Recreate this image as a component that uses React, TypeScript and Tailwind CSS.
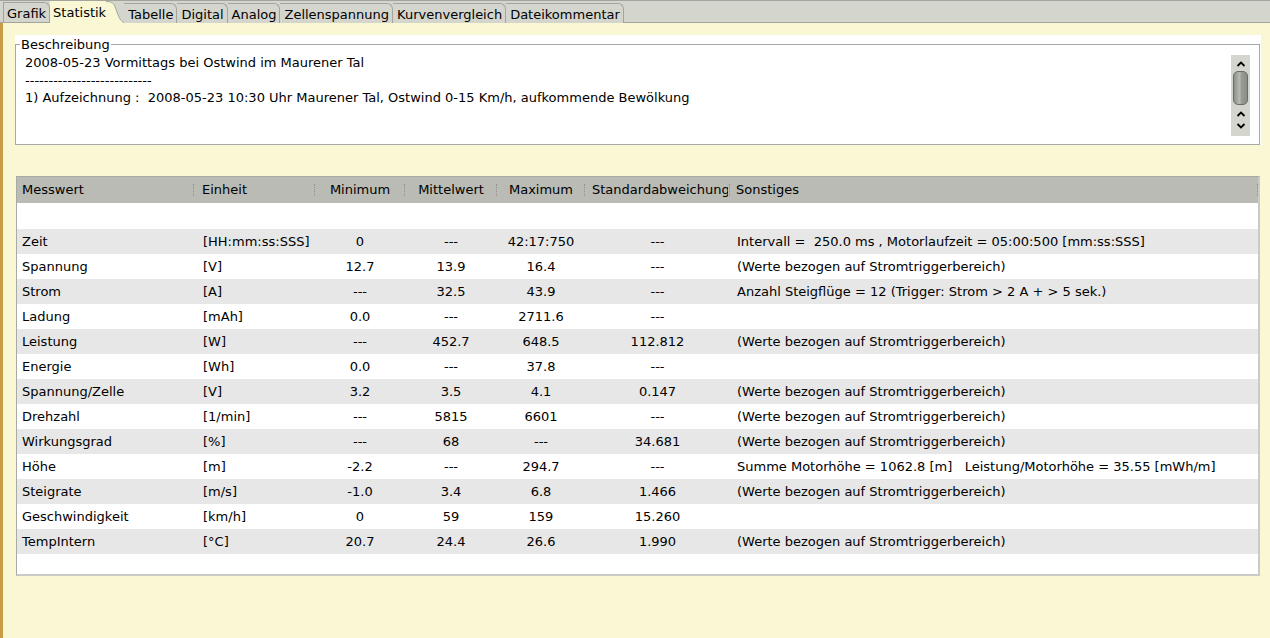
import React from "react";

const W = "(Werte bezogen auf Stromtriggerbereich)";
const rows: string[][] = [
  ["Zeit", "[HH:mm:ss:SSS]", "0", "---", "42:17:750", "---", "Intervall =  250.0 ms , Motorlaufzeit = 05:00:500 [mm:ss:SSS]"],
  ["Spannung", "[V]", "12.7", "13.9", "16.4", "---", W],
  ["Strom", "[A]", "---", "32.5", "43.9", "---", "Anzahl Steigflüge = 12 (Trigger: Strom > 2 A + > 5 sek.)"],
  ["Ladung", "[mAh]", "0.0", "---", "2711.6", "---", ""],
  ["Leistung", "[W]", "---", "452.7", "648.5", "112.812", W],
  ["Energie", "[Wh]", "0.0", "---", "37.8", "---", ""],
  ["Spannung/Zelle", "[V]", "3.2", "3.5", "4.1", "0.147", W],
  ["Drehzahl", "[1/min]", "---", "5815", "6601", "---", W],
  ["Wirkungsgrad", "[%]", "---", "68", "---", "34.681", W],
  ["Höhe", "[m]", "-2.2", "---", "294.7", "---", "Summe Motorhöhe = 1062.8 [m]   Leistung/Motorhöhe = 35.55 [mWh/m]"],
  ["Steigrate", "[m/s]", "-1.0", "3.4", "6.8", "1.466", W],
  ["Geschwindigkeit", "[km/h]", "0", "59", "159", "15.260", ""],
  ["TempIntern", "[°C]", "20.7", "24.4", "26.6", "1.990", W],
];

function Sep() {
  return <span className="absolute right-0 top-[7px] h-[12px] border-r border-dotted border-[#8f918a]" />;
}

function Tab({ label }: { label: string }) {
  return (
    <div className="h-[21px] mt-[2px] pl-[4px] pr-[3px] border-r border-t border-[#a3a49e] rounded-tr-[6px] flex items-center bg-[#d4d6ce]">
      {label}
    </div>
  );
}

export default function App() {
  return (
    <div className="w-[1270px] h-[638px] flex flex-col overflow-hidden font-['DejaVu_Sans',sans-serif] text-[13px] text-black">
      {/* tab bar */}
      <div className="h-[23px] flex bg-[#d4d6ce] border-t border-b border-[#a3a49e] pl-[3px] leading-none">
        <div className="h-[21px] mt-[1px] pl-[3px] pr-[3px] border-l border-r border-t border-[#a3a49e] rounded-tr-[6px] flex items-center">
          Grafik
        </div>
        <div className="relative h-[22px] -mb-[1px] flex z-10">
          <div className="h-[22px] pl-[3px] bg-[#faf7d5] flex items-center">Statistik</div>
          <svg width="18" height="22" viewBox="0 0 18 22" className="block">
            <path d="M0 0 C8 0 8 3 11 11 C13 17 15 20.5 18 21.5 L18 22 L0 22 Z" fill="#faf7d5" />
            <path d="M0 0.5 C8 0.5 8 3 11 11 C13 17 15 20.5 18 21.5" fill="none" stroke="#a3a49e" strokeWidth="1" />
          </svg>
        </div>
        <Tab label="Tabelle" />
        <Tab label="Digital" />
        <Tab label="Analog" />
        <Tab label="Zellenspannung" />
        <Tab label="Kurvenvergleich" />
        <Tab label="Dateikommentar" />
      </div>

      {/* content */}
      <div className="flex-1 bg-[#faf7d5] border-l-[3px] border-[#c69c45] pl-[12px] pr-[9px] pt-[12px]">
        {/* Beschreibung group */}
        <div className="h-[110px] w-[1246px] bg-white pt-[9px]">
          <div className="relative h-[101px] border border-[#a8a8a8] mr-[1px]">
            <span className="absolute left-[4px] -top-[8px] bg-white leading-[15px] px-[1px]">Beschreibung</span>
            <div className="pl-[9px] pt-[9px] leading-[17.5px] whitespace-pre">
              <div>2008-05-23 Vormittags bei Ostwind im Maurener Tal</div>
              <div>---------------------------</div>
              <div>1) Aufzeichnung :  2008-05-23 10:30 Uhr Maurener Tal, Ostwind 0-15 Km/h, aufkommende Bewölkung</div>
            </div>
            {/* scrollbar */}
            <div className="absolute right-[9px] top-[10px] w-[19px] h-[81px] bg-[#d4d6ce] flex flex-col items-center">
              <svg width="10" height="8" viewBox="0 0 10 8" className="mt-[5px]">
                <path d="M1.5 6 L5 2.5 L8.5 6" stroke="#000" strokeWidth="1.8" fill="none" />
              </svg>
              <div className="mt-[3px] w-[15px] h-[34px] rounded-[5px] border border-[#6a6c66] bg-[linear-gradient(90deg,#8e908a,#b8bab3_45%,#9a9c96_55%,#8a8c86)]" />
              <svg width="10" height="8" viewBox="0 0 10 8" className="mt-[5px]">
                <path d="M1.5 6 L5 2.5 L8.5 6" stroke="#000" strokeWidth="1.8" fill="none" />
              </svg>
              <svg width="10" height="8" viewBox="0 0 10 8" className="mt-[4px]">
                <path d="M1.5 2 L5 5.5 L8.5 2" stroke="#000" strokeWidth="1.8" fill="none" />
              </svg>
            </div>
          </div>
        </div>

        {/* table */}
        <div className="mt-[31px] ml-[1px] w-[1244px] h-[400px] bg-white border-t border-l border-[#a8aaa4] border-r-[2px] border-r-[#c9cbc6] border-b-[2px] border-b-[#c9cbc6]">
          <div className="h-[26px] bg-[#b9bbb4] flex items-center">
            <div className="relative h-full w-[177px] pl-[5px] flex items-center">Messwert<Sep /></div>
            <div className="relative h-full w-[121px] pl-[8px] flex items-center">Einheit<Sep /></div>
            <div className="relative h-full w-[90px] flex items-center justify-center">Minimum<Sep /></div>
            <div className="relative h-full w-[92px] flex items-center justify-center">Mittelwert<Sep /></div>
            <div className="relative h-full w-[88px] flex items-center justify-center">Maximum<Sep /></div>
            <div className="relative h-full w-[145px] pl-[7px] flex items-center">
              <span className="block w-[136px] overflow-hidden whitespace-nowrap">Standardabweichung</span>
              <Sep />
            </div>
            <div className="relative h-full flex-1 pl-[6px] flex items-center">Sonstiges<Sep /></div>
          </div>
          <div className="h-[26px]" />
          {rows.map((r, i) => (
            <div key={i} className={`h-[25px] flex items-center ${i % 2 === 0 ? "bg-[#e7e7e7]" : "bg-white"}`}>
              <div className="w-[177px] pl-[5px]">{r[0]}</div>
              <div className="w-[121px] pl-[9px]">{r[1]}</div>
              <div className="w-[90px] text-center">{r[2]}</div>
              <div className="w-[92px] text-center">{r[3]}</div>
              <div className="w-[88px] text-center">{r[4]}</div>
              <div className="w-[145px] text-center">{r[5]}</div>
              <div className="flex-1 pl-[7px] whitespace-pre">{r[6]}</div>
            </div>
          ))}
        </div>
      </div>
    </div>
  );
}
